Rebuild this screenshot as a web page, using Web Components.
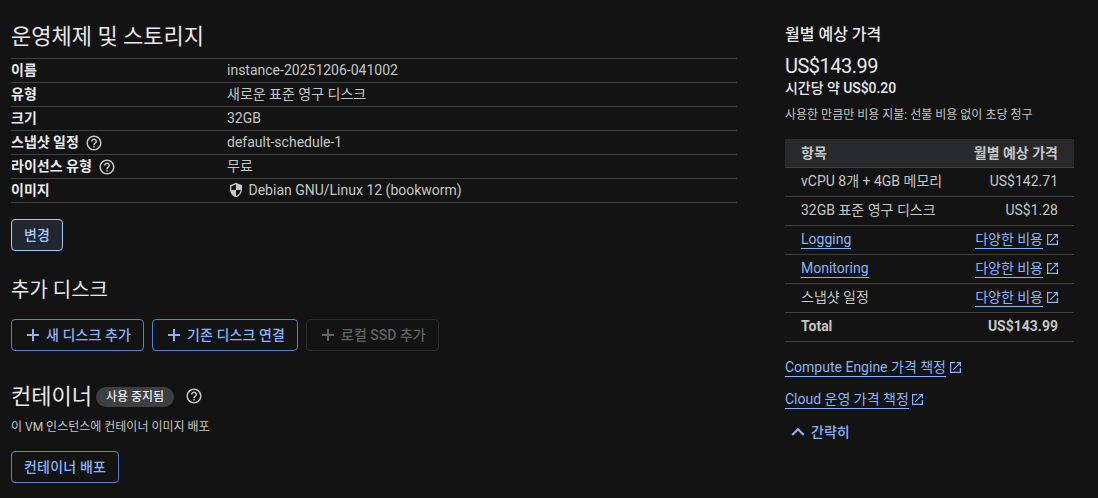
<!DOCTYPE html>
<html lang="ko">
<head>
<meta charset="utf-8">
<title>VM 인스턴스 만들기</title>
<style>
  html, body {
    height: 100%;
  }
  body {
    margin: 0;
    overflow: hidden;
    background: #131314;
    color: #c4c7c5;
    font: 400 14px/20px Roboto, "Noto Sans CJK KR", sans-serif;
    --line: #3c4043;
    --bright: #e8eaed;
    --blue: #8ab4f8;
  }
</style>
</head>
<body>
<vm-page>
  <section-title style="--gap: 8px">운영체제 및 스토리지</section-title>
  <detail-list>
    <detail-row label="이름">instance-20251206-041002</detail-row>
    <detail-row label="유형">새로운 표준 영구 디스크</detail-row>
    <detail-row label="크기">32GB</detail-row>
    <detail-row label="스냅샷 일정" help>default-schedule-1</detail-row>
    <detail-row label="라이선스 유형" help>무료</detail-row>
    <detail-row label="이미지"><ui-icon name="shield" size="16" style="margin: 0 4.5px 0 1px"></ui-icon>Debian GNU/Linux 12 (bookworm)</detail-row>
  </detail-list>
  <button-row style="--top: 16px">
    <outline-button active>변경</outline-button>
  </button-row>

  <section-title style="--top: 25px; --size: 20px; --gap: 16px">추가 디스크</section-title>
  <button-row>
    <outline-button icon="plus">새 디스크 추가</outline-button>
    <outline-button icon="plus">기존 디스크 연결</outline-button>
    <outline-button icon="plus" disabled>로컬 SSD 추가</outline-button>
  </button-row>

  <section-title style="--top: 32px; --gap: 9px">컨테이너
    <status-chip slot="after">사용 중지됨</status-chip>
    <ui-icon slot="after" name="help" size="18" style="margin: 0 0 2px 11px"></ui-icon>
  </section-title>
  <small-text>이 VM 인스턴스에 컨테이너 이미지 배포</small-text>
  <button-row style="--top: 16px">
    <outline-button style="--tracking: 0.2px">컨테이너 배포</outline-button>
  </button-row>

  <price-summary slot="side" heading="월별 예상 가격" price="US$143.99" hourly="시간당 약 US$0.20">
    <small-text slot="note">사용한 만큼만 비용 지불: 선불 비용 없이 초당 청구</small-text>
    <price-row head><span>항목</span><span slot="cost">월별 예상 가격</span></price-row>
    <price-row><span>vCPU 8개 + 4GB 메모리</span><span slot="cost">US$142.71</span></price-row>
    <price-row><span>32GB 표준 영구 디스크</span><span slot="cost">US$1.28</span></price-row>
    <price-row><text-link>Logging</text-link><text-link slot="cost" external>다양한 비용</text-link></price-row>
    <price-row><text-link>Monitoring</text-link><text-link slot="cost" external>다양한 비용</text-link></price-row>
    <price-row><span>스냅샷 일정</span><text-link slot="cost" external>다양한 비용</text-link></price-row>
    <price-row total><span>Total</span><span slot="cost">US$143.99</span></price-row>
    <text-link slot="links" external>Compute Engine 가격 책정</text-link>
    <text-link slot="links" external>Cloud 운영 가격 책정</text-link>
    <collapse-toggle slot="links">간략히</collapse-toggle>
  </price-summary>
</vm-page>

<script>
const ICONS = {
  help: '<path d="M11 18h2v-2h-2v2zm1-16C6.48 2 2 6.48 2 12s4.48 10 10 10 10-4.48 10-10S17.52 2 12 2zm0 18c-4.41 0-8-3.59-8-8s3.59-8 8-8 8 3.59 8 8-3.59 8-8 8zm0-14c-2.21 0-4 1.79-4 4h2c0-1.1.9-2 2-2s2 .9 2 2c0 2-3 1.75-3 5h2c0-2.250 3-2.500 3-5 0-2.210-1.790-4-4-4z"/>',
  shield: '<path d="M12 1 3 5v6c0 5.550 3.840 10.740 9 12 5.160-1.260 9-6.450 9-12V5l-9-4zm0 11h7c-.53 4.120-3.280 7.790-7 8.940V12H5V6.300l7-3.110V12z"/>',
  plus: '<path d="M10.500 3h3v7.500H21v3h-7.500V21h-3v-7.500H3v-3h7.500z"/>',
  external: '<path d="M19 19H5V5h6V3H3v18h18v-8h-2v6zM14 3v2h3.590l-9.830 9.830 1.410 1.410L19 6.410V10h2V3h-7z"/>',
  up: '<path d="m12 8-6 6 1.410 1.410L12 10.830l4.590 4.580L18 14z"/>',
};

// Shared base: puts the class styles and markup in an open shadow root
class UiElement extends HTMLElement {
  constructor() {
    super();
    this.attachShadow({ mode: "open" });
  }

  connectedCallback() {
    this.shadowRoot.innerHTML = `<style>${this.constructor.styles}</style>${this.render()}`;
  }

  attr(name) {
    return this.getAttribute(name) || "";
  }
}

class UiIcon extends UiElement {
  static styles = `
    :host { display: inline-flex; flex: none; }
    svg { display: block; fill: currentColor; }
  `;

  render() {
    const size = this.attr("size") || 18;
    const box = this.attr("box") || "0 0 24 24";
    return `<svg width="${size}" height="${size}" viewBox="${box}">${ICONS[this.attr("name")]}</svg>`;
  }
}

class VmPage extends UiElement {
  static styles = `
    :host { display: grid; grid-template-columns: 726px 289px; column-gap: 48px; padding: 23px 24px 0 11px; }
    main, aside { min-width: 0; }
  `;

  render() {
    return `<main><slot></slot></main><aside><slot name="side"></slot></aside>`;
  }
}

class SectionTitle extends UiElement {
  static styles = `
    :host { display: flex; align-items: center; margin: var(--top, 0) 0 var(--gap, 0); height: 27px; }
    h2 { margin: 0; font-weight: 400; font-size: var(--size, 22px); line-height: 28px; color: var(--bright); white-space: nowrap; }
  `;

  render() {
    return `<h2><slot></slot></h2><slot name="after"></slot>`;
  }
}

class DetailList extends UiElement {
  static styles = `
    :host { display: block; border-top: 1px solid var(--line); }
  `;

  render() {
    return `<slot></slot>`;
  }
}

class DetailRow extends UiElement {
  static styles = `
    :host { display: grid; grid-template-columns: 216px 1fr; height: 23px; border-bottom: 1px solid var(--line); }
    div { display: flex; align-items: center; height: 21px; white-space: nowrap; }
    .label { font-weight: 700; color: var(--bright); }
    .label ui-icon { margin: 2px 0 0 6px; color: #c4c7c5; }
  `;

  render() {
    const help = this.hasAttribute("help") ? `<ui-icon name="help" size="18"></ui-icon>` : "";
    return `<div class="label">${this.attr("label")}${help}</div><div><slot></slot></div>`;
  }
}

class ButtonRow extends UiElement {
  static styles = `
    :host { display: flex; gap: 8px; margin-top: var(--top, 0); }
  `;

  render() {
    return `<slot></slot>`;
  }
}

class OutlineButton extends UiElement {
  static styles = `
    :host { display: block; }
    button {
      display: flex;
      align-items: center;
      height: 32px;
      padding: 0 12px;
      border: 1px solid #5484d1;
      border-radius: 4px;
      background: none;
      color: var(--blue);
      font: inherit;
      font-weight: 500;
      letter-spacing: var(--tracking, 0.1px);
      white-space: nowrap;
    }
    ui-icon { margin: 0 5px 0 1px; }
    :host([active]) button { background: #22262e; border-color: #a8c7fa; color: #a8c7fa; }
    :host([disabled]) button { border-color: #2b2c2d; color: #616263; letter-spacing: 0; }
  `;

  render() {
    const icon = this.attr("icon");
    return `<button>${icon ? `<ui-icon name="${icon}" size="16"></ui-icon>` : ""}<slot></slot></button>`;
  }
}

class StatusChip extends UiElement {
  static styles = `
    :host {
      display: block;
      margin-left: 4px;
      padding: 0 10px;
      border-radius: 10px;
      background: #3c4043;
      color: var(--bright);
      font-size: 12px;
      font-weight: 500;
      line-height: 20px;
      white-space: nowrap;
    }
  `;

  render() {
    return `<slot></slot>`;
  }
}

class SmallText extends UiElement {
  static styles = `
    :host { display: block; font-size: 12px; line-height: 16px; white-space: nowrap; }
  `;

  render() {
    return `<slot></slot>`;
  }
}

class TextLink extends UiElement {
  static styles = `
    :host { display: flex; align-items: center; color: var(--blue); white-space: nowrap; }
    a { line-height: 18px; border-bottom: 1px solid var(--blue); }
    ui-icon { margin: 0 0.5px 0 3.5px; }
  `;

  render() {
    const icon = this.hasAttribute("external") ? `<ui-icon name="external" size="11" box="3 3 18 18"></ui-icon>` : "";
    return `<a><slot></slot></a>${icon}`;
  }
}

class PriceRow extends UiElement {
  static styles = `
    :host {
      display: flex;
      align-items: center;
      justify-content: space-between;
      height: 26px;
      padding: 0 16px 2px;
      border-bottom: 1px solid var(--line);
      white-space: nowrap;
    }
    :host([head]) { height: 28px; padding-bottom: 0; background: #28292c; font-weight: 700; }
    :host([total]) { font-weight: 700; }
  `;

  render() {
    return `<slot></slot><slot name="cost"></slot>`;
  }
}

class PriceSummary extends UiElement {
  static styles = `
    :host { display: block; color: #c4c7c5; }
    h3 { margin: 0; font-size: 16px; line-height: 24px; font-weight: 500; color: var(--bright); }
    .price { margin-top: 7px; font-size: 20px; line-height: 24px; letter-spacing: -0.5px; color: var(--bright); }
    .hourly { font-weight: 500; line-height: 20px; letter-spacing: -0.05px; color: var(--bright); }
    .note { margin: 9px 0 16px; }
    .links { display: flex; flex-direction: column; gap: 13px; margin-top: 16px; }
  `;

  render() {
    return `
      <h3>${this.attr("heading")}</h3>
      <div class="price">${this.attr("price")}</div>
      <div class="hourly">${this.attr("hourly")}</div>
      <div class="note"><slot name="note"></slot></div>
      <slot></slot>
      <div class="links"><slot name="links"></slot></div>
    `;
  }
}

class CollapseToggle extends UiElement {
  static styles = `
    :host { display: flex; align-items: center; height: 20px; color: var(--blue); font-weight: 500; }
  `;

  render() {
    return `<ui-icon name="up" size="26"></ui-icon><slot></slot>`;
  }
}

customElements.define("ui-icon", UiIcon);
customElements.define("vm-page", VmPage);
customElements.define("section-title", SectionTitle);
customElements.define("detail-list", DetailList);
customElements.define("detail-row", DetailRow);
customElements.define("button-row", ButtonRow);
customElements.define("outline-button", OutlineButton);
customElements.define("status-chip", StatusChip);
customElements.define("small-text", SmallText);
customElements.define("text-link", TextLink);
customElements.define("price-row", PriceRow);
customElements.define("price-summary", PriceSummary);
customElements.define("collapse-toggle", CollapseToggle);
</script>
</body>
</html>
